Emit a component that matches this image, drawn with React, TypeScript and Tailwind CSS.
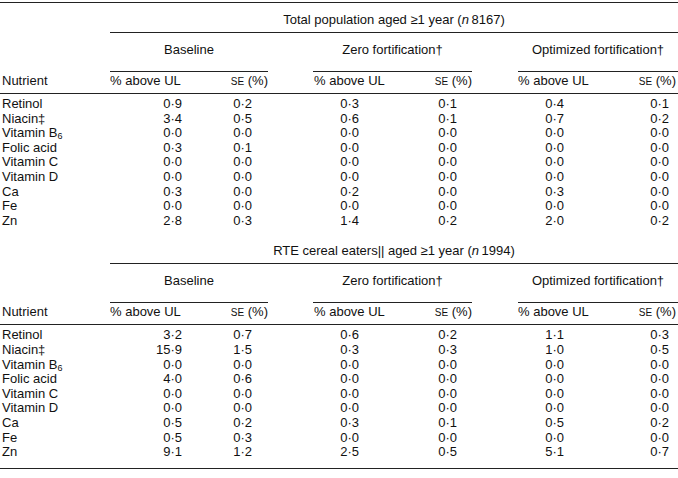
import React from 'react';

type Row = { name: React.ReactNode; v: string[] };

const cols = 'grid grid-cols-[110px_80px_78px_45px_80px_79px_46px_80px_80px]';

const b6 = (
  <>
    Vitamin B<sub className="text-[9px]">6</sub>
  </>
);

const total: Row[] = [
  { name: 'Retinol', v: ['0·9', '0·2', '0·3', '0·1', '0·4', '0·1'] },
  { name: 'Niacin‡', v: ['3·4', '0·5', '0·6', '0·1', '0·7', '0·2'] },
  { name: b6, v: ['0·0', '0·0', '0·0', '0·0', '0·0', '0·0'] },
  { name: 'Folic acid', v: ['0·3', '0·1', '0·0', '0·0', '0·0', '0·0'] },
  { name: 'Vitamin C', v: ['0·0', '0·0', '0·0', '0·0', '0·0', '0·0'] },
  { name: 'Vitamin D', v: ['0·0', '0·0', '0·0', '0·0', '0·0', '0·0'] },
  { name: 'Ca', v: ['0·3', '0·0', '0·2', '0·0', '0·3', '0·0'] },
  { name: 'Fe', v: ['0·0', '0·0', '0·0', '0·0', '0·0', '0·0'] },
  { name: 'Zn', v: ['2·8', '0·3', '1·4', '0·2', '2·0', '0·2'] },
];

const eaters: Row[] = [
  { name: 'Retinol', v: ['3·2', '0·7', '0·6', '0·2', '1·1', '0·3'] },
  { name: 'Niacin‡', v: ['15·9', '1·5', '0·3', '0·3', '1·0', '0·5'] },
  { name: b6, v: ['0·0', '0·0', '0·0', '0·0', '0·0', '0·0'] },
  { name: 'Folic acid', v: ['4·0', '0·6', '0·0', '0·0', '0·0', '0·0'] },
  { name: 'Vitamin C', v: ['0·0', '0·0', '0·0', '0·0', '0·0', '0·0'] },
  { name: 'Vitamin D', v: ['0·0', '0·0', '0·0', '0·0', '0·0', '0·0'] },
  { name: 'Ca', v: ['0·5', '0·2', '0·3', '0·1', '0·5', '0·2'] },
  { name: 'Fe', v: ['0·5', '0·3', '0·0', '0·0', '0·0', '0·0'] },
  { name: 'Zn', v: ['9·1', '1·2', '2·5', '0·5', '5·1', '0·7'] },
];

function Se() {
  return (
    <>
      <span className="text-[10px]">SE</span> (%)
    </>
  );
}

function Section({ title, rows }: { title: React.ReactNode; rows: Row[] }) {
  return (
    <div>
      {/* заголовок группы */}
      <div className={cols}>
        <div className="col-start-2 col-span-8 border-b border-[#222] pb-[5px] pt-[10px] text-center leading-[14px]">
          {title}
        </div>
      </div>
      <div className={`${cols} pt-[10px]`}>
        <div className="col-start-2 col-span-2 border-b border-[#222] pb-[14px] text-center leading-[14px]">
          Baseline
        </div>
        <div className="col-start-5 col-span-2 border-b border-[#222] pb-[14px] text-center leading-[14px]">
          Zero fortification†
        </div>
        <div className="col-start-8 col-span-2 border-b border-[#222] pb-[14px] text-center leading-[14px]">
          Optimized fortification†
        </div>
      </div>
      <div className={`${cols} border-b border-[#222] pb-[4px] pt-[2px] leading-[14px]`}>
        <div className="pl-[2px]">Nutrient</div>
        <div>% above UL</div>
        <div className="text-right">
          <Se />
        </div>
        <div />
        <div className="pl-[1px]">% above UL</div>
        <div className="text-right">
          <Se />
        </div>
        <div />
        <div>% above UL</div>
        <div className="pr-[2px] text-right">
          <Se />
        </div>
      </div>
      <div className="pt-[3px]">
        {rows.map((r, i) => (
          <div key={i} className={`${cols} h-[14.6px] leading-[14.6px]`}>
            <div className="pl-[2px]">{r.name}</div>
            <div className="pr-[8px] text-right">{r.v[0]}</div>
            <div className="pr-[16px] text-right">{r.v[1]}</div>
            <div />
            <div className="pr-[34px] text-right">{r.v[2]}</div>
            <div className="pr-[15px] text-right">{r.v[3]}</div>
            <div />
            <div className="pr-[34px] text-right">{r.v[4]}</div>
            <div className="pr-[9px] text-right">{r.v[5]}</div>
          </div>
        ))}
      </div>
    </div>
  );
}

export default function App() {
  return (
    <div
      className="h-[478px] w-[678px] bg-white pt-[2px] text-[13px] text-[#111]"
      style={{ fontFamily: '"Liberation Sans", Arial, sans-serif' }}
    >
      <div className="border-t border-[#222]">
        <Section
          title={
            <>
              Total population aged ≥1 year (<i>n</i>
              {'\u2009'}8167)
            </>
          }
          rows={total}
        />
        <div className="mt-[6px]">
          <Section
            title={
              <>
                RTE cereal eaters|| aged ≥1 year (<i>n</i>
                {'\u2009'}1994)
              </>
            }
            rows={eaters}
          />
        </div>
        <div className="mt-[8px] border-b border-[#222]" />
      </div>
    </div>
  );
}
